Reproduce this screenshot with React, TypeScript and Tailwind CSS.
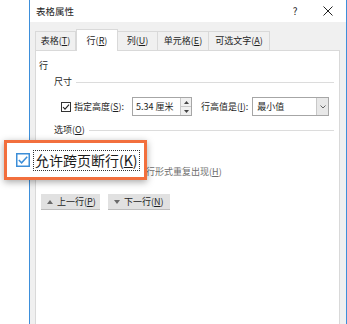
import React from 'react';

const FONT = "font-['Noto_Sans_CJK_SC','Noto_Sans',sans-serif]";

// label with windows-style accelerator, e.g. 表格(T)
function Acc({ label, k, colon }: { label: string; k: string; colon?: boolean }) {
  return (
    <span>
      {label}(<span className="underline underline-offset-[1px]">{k}</span>){colon ? ':' : ''}
    </span>
  );
}

function SmallCheck({ checked }: { checked?: boolean }) {
  return (
    <svg width="10" height="10" viewBox="0 0 10 10" className="shrink-0">
      <rect x="0.5" y="0.5" width="9" height="9" fill="#fff" stroke="#333" strokeWidth="1" />
      {checked && <polyline points="2,5 4,7.2 8,2.6" fill="none" stroke="#222" strokeWidth="1.1" />}
    </svg>
  );
}

const tabs = [
  { label: '表格', k: 'T', w: 'w-[41px]', active: false },
  { label: '行', k: 'R', w: 'w-[42px]', active: true },
  { label: '列', k: 'U', w: 'w-[40px]', active: false },
  { label: '单元格', k: 'E', w: 'w-[51px]', active: false },
  { label: '可选文字', k: 'A', w: 'w-[61px]', active: false },
];

export default function App() {
  return (
    <div className={`relative h-[324px] w-[347px] overflow-hidden bg-white text-[9px] leading-[12px] text-[#1e1e1e] ${FONT}`}>
      <div className="ml-[29px] flex h-full w-[318px] flex-col border-x border-[#3d8fdb]">
        {/* title bar */}
        <div className="flex h-[22px] shrink-0 items-center bg-white pl-[6px] pr-[8px]">
          <span className="text-[9.5px]">表格属性</span>
          <div className="ml-auto flex items-center">
            <span className="w-[20px] text-center text-[10px]">?</span>
            <span className="ml-[13px] flex w-[20px] justify-center">
              <svg width="10" height="10" viewBox="0 0 10 10">
                <path d="M0.5 0.5 L9.5 9.5 M9.5 0.5 L0.5 9.5" stroke="#222" strokeWidth="1" />
              </svg>
            </span>
          </div>
        </div>

        {/* body */}
        <div className="flex flex-1 flex-col bg-[#f0f0f0] pl-[5px] pr-[6px] pt-[7px]">
          <div className="flex h-[21px] shrink-0 items-end">
            {tabs.map((t, i) => (
              <div
                key={t.label}
                className={`flex items-center justify-center border-t border-r border-[#d9d9d9] ${t.w} ${i === 0 ? 'border-l' : ''} ${
                  t.active ? 'relative z-10 -mb-px h-[22px] border-l bg-white' : 'h-[19px] bg-[#f0f0f0]'
                }`}
              >
                <Acc label={t.label} k={t.k} />
              </div>
            ))}
          </div>

          <div className="flex flex-1 flex-col border border-b-0 border-[#d9d9d9] bg-white pr-[5px] pt-[7px]">
            <div className="flex h-[16px] items-center pl-[3px]">行</div>

            <div className="flex h-[16px] items-center pl-[18px]">
              <span>尺寸</span>
              <div className="ml-[4px] h-px flex-1 bg-[#dcdcdc]" />
            </div>

            <div className="mt-[7px] flex h-[19px] items-center pl-[25px]">
              <SmallCheck checked />
              <span className="ml-[3px]">
                <Acc label="指定高度" k="S" colon />
              </span>
              <div className="ml-[8px] flex h-[19px] w-[60px] border border-[#a6a6a6]">
                <div className="flex flex-1 items-center pl-[3px]">5.34 厘米</div>
                <div className="flex w-[11px] flex-col border-l border-[#c8c8c8] bg-[#f0f0f0]">
                  <div className="flex flex-1 items-center justify-center border-b border-[#c8c8c8]">
                    <svg width="5" height="3" viewBox="0 0 5 3">
                      <polygon points="0,3 2.5,0 5,3" fill="#444" />
                    </svg>
                  </div>
                  <div className="flex flex-1 items-center justify-center">
                    <svg width="5" height="3" viewBox="0 0 5 3">
                      <polygon points="0,0 2.5,3 5,0" fill="#444" />
                    </svg>
                  </div>
                </div>
              </div>
              <span className="ml-[9px]">
                <Acc label="行高值是" k="I" colon />
              </span>
              <div className="ml-[4px] flex h-[19px] w-[77px] border border-[#a6a6a6]">
                <div className="flex flex-1 items-center pl-[4px]">最小值</div>
                <div className="flex w-[12px] items-center justify-center border-l border-[#c8c8c8] bg-[#e8e8e8]">
                  <svg width="6" height="4" viewBox="0 0 6 4">
                    <polyline points="0.5,0.5 3,3 5.5,0.5" fill="none" stroke="#555" strokeWidth="0.9" />
                  </svg>
                </div>
              </div>
            </div>

            <div className="mt-[6px] flex h-[16px] items-center pl-[18px]">
              <Acc label="选项" k="O" />
              <div className="ml-[4px] h-px flex-1 bg-[#dcdcdc]" />
            </div>

            <div className="mt-[5px] flex h-[19px] items-center pl-[25px]">
              <SmallCheck checked />
              <span className="ml-[3px]">
                <Acc label="允许跨页断行" k="K" />
              </span>
            </div>
            <div className="flex h-[19px] items-center pl-[25px] text-[#6e6e6e]">
              <SmallCheck />
              <span className="ml-[3px]">
                <Acc label="在各页顶端以标题行形式重复出现" k="H" />
              </span>
            </div>

            <div className="mt-[13px] flex gap-[8px] pl-[5px]">
              <div className="flex h-[16px] w-[59px] items-center border-b border-[#bdbdbd] bg-[#e1e1e1] pl-[6px]">
                <svg width="6" height="4" viewBox="0 0 6 4">
                  <polygon points="0,4 3,0 6,4" fill="#6a6a6a" />
                </svg>
                <span className="ml-[4px]">
                  <Acc label="上一行" k="P" />
                </span>
              </div>
              <div className="flex h-[16px] w-[62px] items-center border-b border-[#bdbdbd] bg-[#e1e1e1] pl-[6px]">
                <svg width="6" height="4" viewBox="0 0 6 4">
                  <polygon points="0,0 3,4 6,0" fill="#6a6a6a" />
                </svg>
                <span className="ml-[4px]">
                  <Acc label="下一行" k="N" />
                </span>
              </div>
            </div>
          </div>
        </div>
      </div>

      {/* magnified callout */}
      <div className="absolute left-[4px] top-[140px] flex h-[40px] w-[143px] items-center border-[3px] border-[#f26f3d] bg-white pl-[9px] shadow-[0_2px_7px_rgba(0,0,0,0.35)]">
        <svg width="14" height="14" viewBox="0 0 14 14" className="shrink-0">
          <rect x="0.75" y="0.75" width="12.5" height="12.5" fill="#fff" stroke="#3c8ed8" strokeWidth="1.5" />
          <polyline points="2.8,7 5.6,9.8 11.2,3.8" fill="none" stroke="#3c8ed8" strokeWidth="1.5" />
        </svg>
        <div className="ml-[3px] flex h-[21px] items-center border border-dotted border-[#333] px-[1px] text-[14px] leading-[18px] text-[#1a1a1a]">
          <Acc label="允许跨页断行" k="K" />
        </div>
      </div>
    </div>
  );
}
